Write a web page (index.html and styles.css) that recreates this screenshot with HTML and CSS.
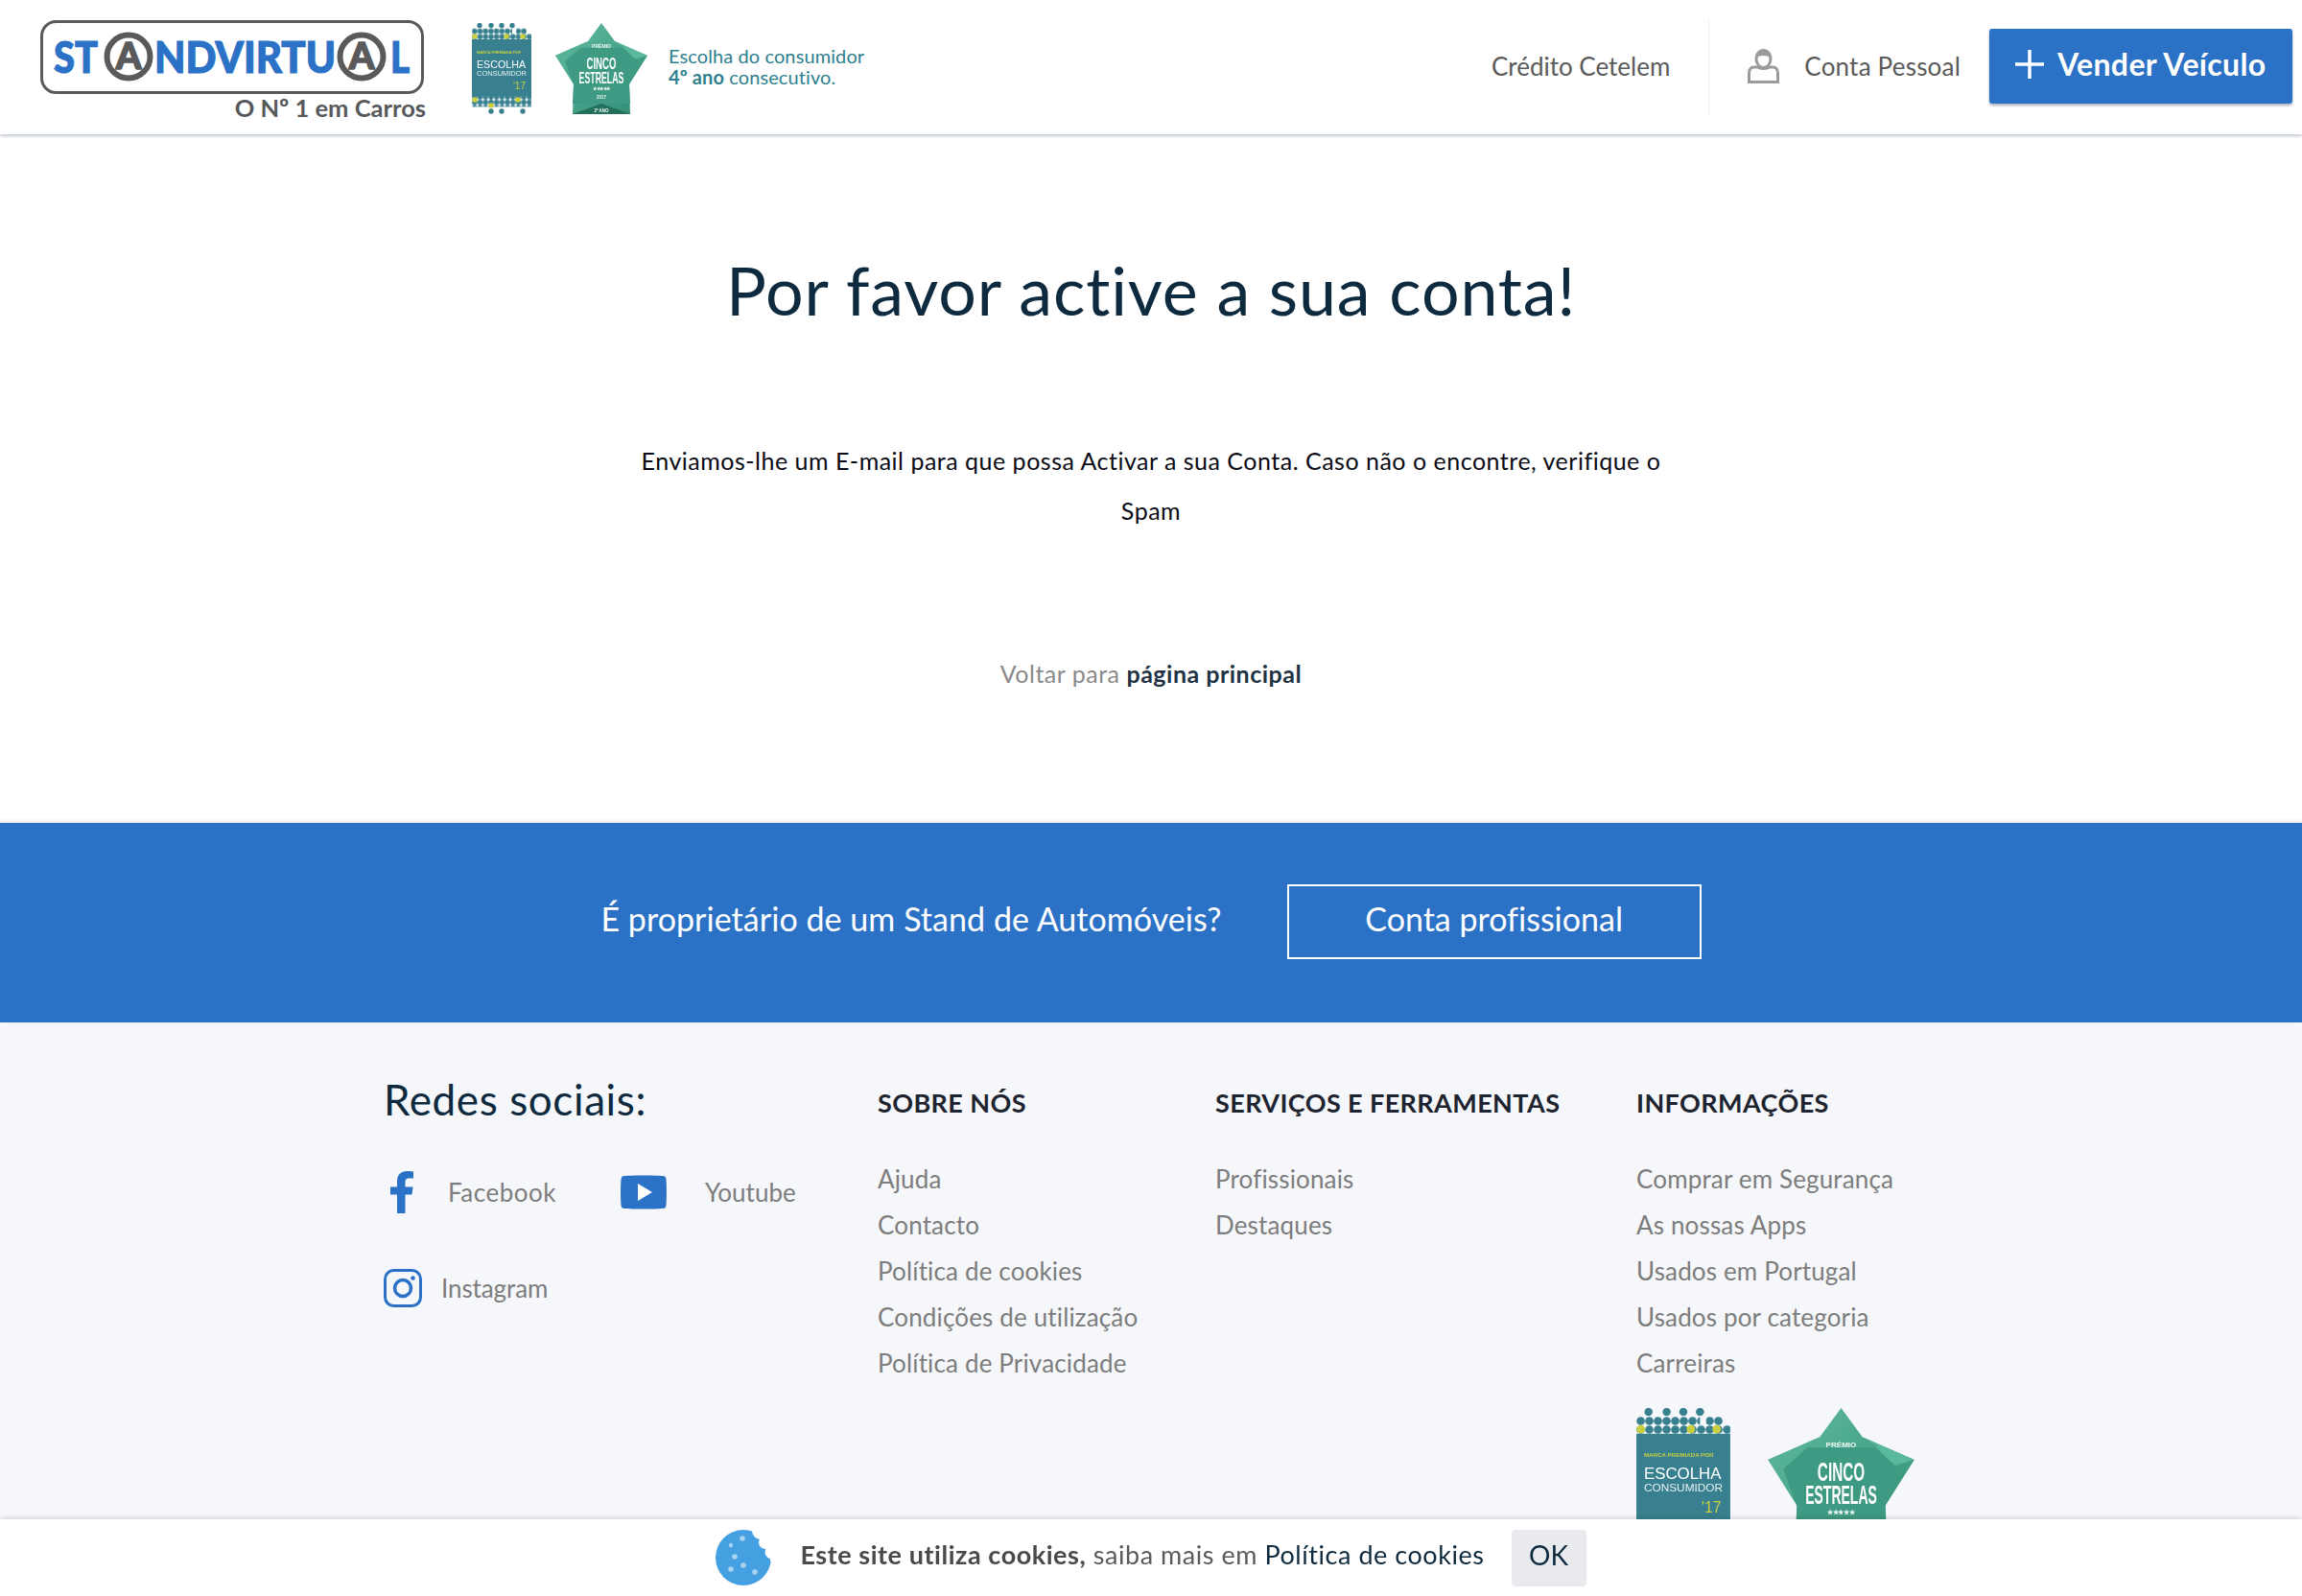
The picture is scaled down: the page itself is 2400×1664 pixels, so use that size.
FILE: index.html
```html
<!DOCTYPE html>
<html lang="pt">
<head>
<meta charset="utf-8">
<title>Standvirtual</title>
<link rel="stylesheet" href="styles.css">
</head>
<body>
<svg class="defs" width="0" height="0" aria-hidden="true">
  <defs>
    <linearGradient id="starFill" x1="0" y1="0" x2="1" y2="1">
      <stop offset="0" stop-color="#63bda1"/>
      <stop offset=".55" stop-color="#45a288"/>
      <stop offset="1" stop-color="#2f8a72"/>
    </linearGradient>
    <pattern id="dotGrid" width="5.7" height="5.7" patternUnits="userSpaceOnUse">
      <circle cx="2.85" cy="2.85" r="2.75" fill="#38808f"/>
    </pattern>
    <symbol id="badgeEscolha" viewBox="0 0 62 95">
      <g fill="#38808f">
        <circle cx="8" cy="2.6" r="2.7"/><circle cx="20" cy="2.6" r="2.7"/><circle cx="31" cy="2.6" r="2.7"/><circle cx="42" cy="2.6" r="2.7"/>
      </g>
      <rect x="0" y="5.7" width="42" height="5.7" fill="url(#dotGrid)"/>
      <rect x="46" y="5.7" width="11" height="5.7" fill="url(#dotGrid)"/>
      <rect x="0" y="11.4" width="62" height="5.7" fill="url(#dotGrid)"/>
      <g fill="#c9cf3f"><circle cx="3" cy="14" r="2.8"/><circle cx="36" cy="14" r="2.8"/><circle cx="53" cy="14" r="2.8"/></g>
      <rect x="0" y="17" width="62" height="59" fill="#38808f"/>
      <text x="5" y="32" class="b-tiny" textLength="46" lengthAdjust="spacingAndGlyphs">MARCA PREMIADA POR</text>
      <text x="5" y="47" class="b-main" textLength="51" lengthAdjust="spacingAndGlyphs">ESCOLHA</text>
      <text x="5" y="55" class="b-sub" textLength="52" lengthAdjust="spacingAndGlyphs">CONSUMIDOR</text>
      <text x="56" y="69" class="b-year" text-anchor="end">'17</text>
      <rect x="0" y="76" width="62" height="11.4" fill="url(#dotGrid)"/>
      <g fill="#38808f"><circle cx="20" cy="92" r="2.7"/><circle cx="31" cy="92" r="2.7"/><circle cx="53" cy="92" r="2.7"/></g>
      <g fill="#c9cf3f"><circle cx="3" cy="80" r="2.8"/><circle cx="20" cy="86" r="2.8"/><circle cx="48" cy="80" r="2.8"/></g>
    </symbol>
    <symbol id="badgeStar" viewBox="0 0 96 95">
      <polygon points="48,0 62,19 96,34 77,64 78,95 18,95 19,64 0,34 34,19" fill="url(#starFill)"/>
      <polygon points="62,19 96,34 82,38 70,24" fill="#5ab89c"/>
      <polygon points="34,19 0,34 14,38 26,24" fill="#54b196"/>
      <polygon points="26,26 70,26 86,40 77,64 78,84 18,84 19,64 10,40" fill="#3e9a82"/>
      <polygon points="18,95 48,84 78,95" fill="#226f5c"/>
      <text x="48" y="26" class="s-tiny" text-anchor="middle" textLength="20" lengthAdjust="spacingAndGlyphs">PRÉMIO</text>
      <text x="48" y="48" class="s-main" text-anchor="middle" textLength="31" lengthAdjust="spacingAndGlyphs">CINCO</text>
      <text x="48" y="63" class="s-main" text-anchor="middle" textLength="47" lengthAdjust="spacingAndGlyphs">ESTRELAS</text>
      <text x="48" y="70" class="s-tiny" text-anchor="middle" textLength="18" lengthAdjust="spacing">★★★★★</text>
      <text x="48" y="79" class="s-tiny" text-anchor="middle">2017</text>
      <text x="48" y="93" class="s-tiny" text-anchor="middle">2º ANO</text>
    </symbol>
  </defs>
</svg>

<header class="site-header">
  <a class="logo" href="#">
    <svg class="logo-mark" viewBox="0 0 400 78" width="400" height="78" role="img" aria-label="Standvirtual">
      <rect x="1.5" y="1.5" width="397" height="74" rx="15" class="logo-frame"/>
      <text x="14" y="55" class="logo-word" textLength="46" lengthAdjust="spacingAndGlyphs">ST</text>
      <circle cx="92" cy="38" r="22.5" class="logo-ring"/>
      <text x="92" y="51" class="logo-a" text-anchor="middle">A</text>
      <text x="119" y="55" class="logo-word" textLength="189" lengthAdjust="spacingAndGlyphs">NDVIRTU</text>
      <circle cx="335" cy="38" r="22.5" class="logo-ring"/>
      <text x="335" y="51" class="logo-a" text-anchor="middle">A</text>
      <text x="365" y="55" class="logo-word" textLength="20" lengthAdjust="spacingAndGlyphs">L</text>
    </svg>
    <span class="logo-tag">O Nº 1 em Carros</span>
  </a>
  <svg class="badge badge-head-a" width="62" height="95" aria-hidden="true"><use href="#badgeEscolha"/></svg>
  <svg class="badge badge-head-b" width="96" height="95" aria-hidden="true"><use href="#badgeStar"/></svg>
  <p class="award"><span>Escolha do consumidor</span><br><b>4º ano</b> consecutivo.</p>
  <nav class="top-nav">
    <a class="nav-link nav-credit" href="#">Crédito Cetelem</a>
    <span class="nav-sep"></span>
    <a class="nav-link nav-account" href="#">
      <svg class="user-icon" viewBox="0 0 33 36" width="33" height="36" aria-hidden="true">
        <ellipse cx="16.500" cy="10.500" rx="7.500" ry="9" fill="#fff" stroke="#9b9b9b" stroke-width="3"/>
        <path d="M8 9.500C8 4 11 1 16.500 1S25 4 25 9.500c-3-3.500-14-3.500-17 0z" fill="#9b9b9b"/>
        <path d="M1.500 34.500V25.500c0-4 2-6.500 5-6.500h4c2.500 2 9.500 2 12 0h4c3 0 5 2.500 5 6.500v9z" fill="#fff" stroke="#9b9b9b" stroke-width="3"/>
      </svg>
      Conta Pessoal
    </a>
    <a class="sell-btn" href="#">
      <svg class="plus-icon" viewBox="0 0 30 30" width="30" height="30" aria-hidden="true"><path d="M15 0v30M0 15h30" stroke="#fff" stroke-width="3.500"/></svg>
      Vender Veículo
    </a>
  </nav>
</header>

<main class="activate">
  <h1 class="activate-title">Por favor active a sua conta!</h1>
  <p class="activate-text">Enviamos-lhe um E-mail para que possa Activar a sua Conta. Caso não o encontre, verifique o Spam</p>
  <p class="activate-back">Voltar para <a href="#">página principal</a></p>
</main>

<section class="pro-band">
  <span class="pro-text">É proprietário de um Stand de Automóveis?</span>
  <a class="pro-btn" href="#">Conta profissional</a>
</section>

<footer class="site-footer">
  <div class="social">
    <h2 class="social-title">Redes sociais:</h2>
    <div class="social-row">
      <a class="social-link social-fb" href="#">
        <svg viewBox="0 0 24 44" width="24" height="44" aria-hidden="true"><path d="M7 44V24.500H0v-8h7v-6C7 3.500 11.500 0 17.500 0c2.800 0 5.500.3 6.500.4v7h-4.300c-3.400 0-4.200 1.700-4.200 4.200v4.900h8l-1 8h-7V44z" fill="#2b72c7"/></svg>
        Facebook
      </a>
      <a class="social-link social-yt" href="#">
        <svg viewBox="0 0 48 36" width="48" height="36" aria-hidden="true"><path d="M4 1C12 .3 36 .3 44 1c2.500.2 3.300 1.500 3.500 3.500.6 7 .6 20 0 27-.2 2-1 3.300-3.500 3.500-8 .7-32 .7-40 0-2.500-.2-3.300-1.500-3.500-3.500-.6-7-.6-20 0-27C.7 2.500 1.500 1.200 4 1z" fill="#2b72c7"/><path d="M18 9l15 9-15 9z" fill="#fff"/></svg>
        Youtube
      </a>
    </div>
    <a class="social-link social-ig" href="#">
      <svg viewBox="0 0 40 40" width="40" height="40" aria-hidden="true"><rect x="1.500" y="1.500" width="37" height="37" rx="9" fill="none" stroke="#2b72c7" stroke-width="3"/><circle cx="20" cy="20" r="8.500" fill="none" stroke="#2b72c7" stroke-width="3.500"/><circle cx="30.500" cy="9.500" r="2.300" fill="#2b72c7"/></svg>
      Instagram
    </a>
  </div>
  <div class="foot-col">
    <h3>SOBRE NÓS</h3>
    <a href="#">Ajuda</a>
    <a href="#">Contacto</a>
    <a href="#">Política de cookies</a>
    <a href="#">Condições de utilização</a>
    <a href="#">Política de Privacidade</a>
  </div>
  <div class="foot-col">
    <h3>SERVIÇOS E FERRAMENTAS</h3>
    <a href="#">Profissionais</a>
    <a href="#">Destaques</a>
  </div>
  <div class="foot-col">
    <h3>INFORMAÇÕES</h3>
    <a href="#">Comprar em Segurança</a>
    <a href="#">As nossas Apps</a>
    <a href="#">Usados em Portugal</a>
    <a href="#">Usados por categoria</a>
    <a href="#">Carreiras</a>
    <div class="foot-badges">
      <svg class="badge" width="98" height="150" aria-hidden="true"><use href="#badgeEscolha"/></svg>
      <svg class="badge" width="153" height="151" aria-hidden="true"><use href="#badgeStar"/></svg>
    </div>
  </div>
</footer>

<aside class="cookie-bar">
  <svg class="cookie-icon" viewBox="0 0 58 60" width="58" height="60" aria-hidden="true">
    <circle cx="29" cy="30" r="29" fill="#44a0e0"/>
    <circle cx="47" cy="2" r="9" fill="#fff"/><circle cx="52" cy="14" r="7" fill="#fff"/><circle cx="59" cy="24" r="7.500" fill="#fff"/><circle cx="62" cy="32" r="5" fill="#fff"/>
    <g fill="#a9d2ee"><circle cx="28" cy="10" r="2.800"/><circle cx="16" cy="17" r="2.200"/><circle cx="20" cy="29" r="2.800"/><circle cx="29" cy="38" r="2.800"/><circle cx="16" cy="42" r="2.800"/><circle cx="41" cy="45" r="2.800"/></g>
  </svg>
  <p class="cookie-text"><b>Este site utiliza cookies,</b> saiba mais em <a href="#">Política de cookies</a></p>
  <button class="cookie-ok" type="button">OK</button>
</aside>
</body>
</html>
```
FILE: styles.css
```css
* { box-sizing: border-box; }
html, body { margin: 0; padding: 0; }
body {
  font-family: "Lato", "Open Sans", sans-serif;
  font-variant-ligatures: none;
  color: #0e2a3f;
  background: #fff;
  overflow-x: hidden;
}
a { color: inherit; text-decoration: none; }
.defs { display: block; height: 0; }

.badge { filter: blur(.35px); }
.b-tiny { font: 700 3.500px "Liberation Sans", sans-serif; fill: #c9cf3f; }
.b-main { font: 400 11px "Liberation Sans", sans-serif; fill: #fff; }
.b-sub { font: 400 7px "Liberation Sans", sans-serif; fill: #e8f0f2; }
.b-year { font: 400 10px "Liberation Sans", sans-serif; fill: #c9cf3f; }
.s-tiny { font: 700 4.500px "Liberation Sans Narrow", "Liberation Sans", sans-serif; fill: #eef7f3; }
.s-main { font: 700 17px "Liberation Sans Narrow", "Liberation Sans", sans-serif; fill: #fff; }

.site-header {
  height: 140px;
  display: flex;
  align-items: flex-start;
  padding: 20px 10px 0 42px;
  background: #fff;
  box-shadow: 0 2px 3px rgba(120, 135, 155, .45);
  position: relative;
}
.logo { display: flex; flex-direction: column; align-items: flex-end; width: 402px; flex: none; }
.logo-mark { display: block; align-self: flex-start; margin-top: 1px; }
.logo-frame { fill: #fff; stroke: #5a5a5c; stroke-width: 3; }
.logo-word { font: 900 46px "Lato", sans-serif; fill: #2b72c7; stroke: #2b72c7; stroke-width: 1.200px; }
.logo-ring { fill: none; stroke: #5a5a5c; stroke-width: 6; }
.logo-a { font: 900 38px "Lato", sans-serif; fill: #5a5a5c; stroke: #5a5a5c; stroke-width: 1.500px; }
.logo-tag { font-size: 25.500px; font-weight: 700; line-height: 30px; color: #58595b; margin-top: -2px; white-space: nowrap; }
.badge-head-a { margin: 4px 0 0 48px; flex: none; }
.badge-head-b { margin: 4px 0 0 25px; flex: none; }
.award { margin: 27px 0 0 22px; font-size: 20px; line-height: 22px; color: #2f7f8e; white-space: nowrap; letter-spacing: .1px; }
.top-nav { margin-left: auto; display: flex; align-items: center; margin-top: 10px; }
.nav-link { font-size: 26px; color: #5a5a5a; display: flex; align-items: center; white-space: nowrap; }
.nav-account { letter-spacing: .2px; }
.nav-sep { width: 1px; height: 102px; background: #f0f0f0; margin: -10px 40px -14px 40px; }
.user-icon { margin-right: 26px; }
.sell-btn {
  display: flex; align-items: center; gap: 14px;
  width: 316px; height: 78px; margin-left: 30px; padding: 0 0 5px 27px;
  background: #2b72c7; color: #fff; border-radius: 3px;
  font-size: 32px; font-weight: 700; white-space: nowrap; letter-spacing: .35px;
  box-shadow: 0 2px 3px rgba(30, 60, 100, .4);
}

.activate { height: 718px; display: flex; flex-direction: column; align-items: center; text-align: center; padding-top: 116px; }
.activate-title { margin: 0; font-size: 70px; font-weight: 400; line-height: 92px; color: #0e2a3f; letter-spacing: .85px; }
.activate-text { margin: 105.500px 0 0; width: 1090px; font-size: 25px; line-height: 52px; color: #0a0a14; letter-spacing: .5px; }
.activate-back { margin: 126px 0 0; font-size: 25px; line-height: 36px; color: #8a8a8a; letter-spacing: .5px; }
.activate-back a { color: #1f3345; font-weight: 700; }

.pro-band { height: 208px; background: #2b72c7; display: flex; align-items: center; justify-content: center; gap: 68px; color: #fff; box-shadow: 0 -1px 3px rgba(0,0,0,.15); position: relative; }
.pro-text { font-size: 34px; white-space: nowrap; padding-bottom: 10px; letter-spacing: .05px; }
.pro-btn { width: 432px; height: 78px; margin-bottom: 2px; padding-bottom: 7px; border: 2px solid #fff; display: flex; align-items: center; justify-content: center; font-size: 34px; }

.site-footer {
  background: #f5f7fa;
  display: grid;
  grid-template-columns: 515px 352px 439px 400px;
  padding: 58px 0 60px 400px;
  min-height: 640px;
}
.social-title { margin: -2px 0 0; font-size: 44px; font-weight: 400; line-height: 48px; color: #0e2a3f; letter-spacing: .6px; }
.social-row { display: flex; margin-top: 51px; }
.social-link { font-size: 26px; color: #7d7d7d; display: flex; align-items: center; white-space: nowrap; }
.social-fb { margin-left: 7px; gap: 36px; letter-spacing: .5px; }
.social-yt { margin-left: 67px; gap: 40px; }
.social-ig { gap: 20px; margin-top: 58px; letter-spacing: -.1px; }
.foot-col { display: flex; flex-direction: column; align-items: flex-start; }
.foot-col h3 { margin: -1px 0 28px; font-size: 27px; font-weight: 700; line-height: 54px; color: #1d2430; white-space: nowrap; letter-spacing: .4px; }
.foot-col a { font-size: 26px; line-height: 48px; color: #7d7d7d; white-space: nowrap; letter-spacing: .15px; }
.foot-badges { display: flex; gap: 39px; margin-top: 23px; }

.cookie-bar {
  position: fixed; left: 0; right: 0; bottom: 0; height: 80px;
  background: #fff;
  display: flex; align-items: center; justify-content: center;
  box-shadow: 0 -2px 5px rgba(0, 0, 0, .12);
}
.cookie-icon { flex: none; margin-right: 30px; }
.cookie-text { margin: 0; padding-bottom: 7px; font-size: 27px; color: #5a5a5a; white-space: nowrap; letter-spacing: .54px; }
.cookie-text b { color: #4a4a4a; font-weight: 700; }
.cookie-text a { color: #0e2a3f; }
.cookie-ok { margin-left: 28px; width: 78px; height: 59px; padding: 0 0 6px; border: 0; border-radius: 4px; background: #e8eaee; color: #0e2a3f; font: 400 28px "Lato", sans-serif; }
```
